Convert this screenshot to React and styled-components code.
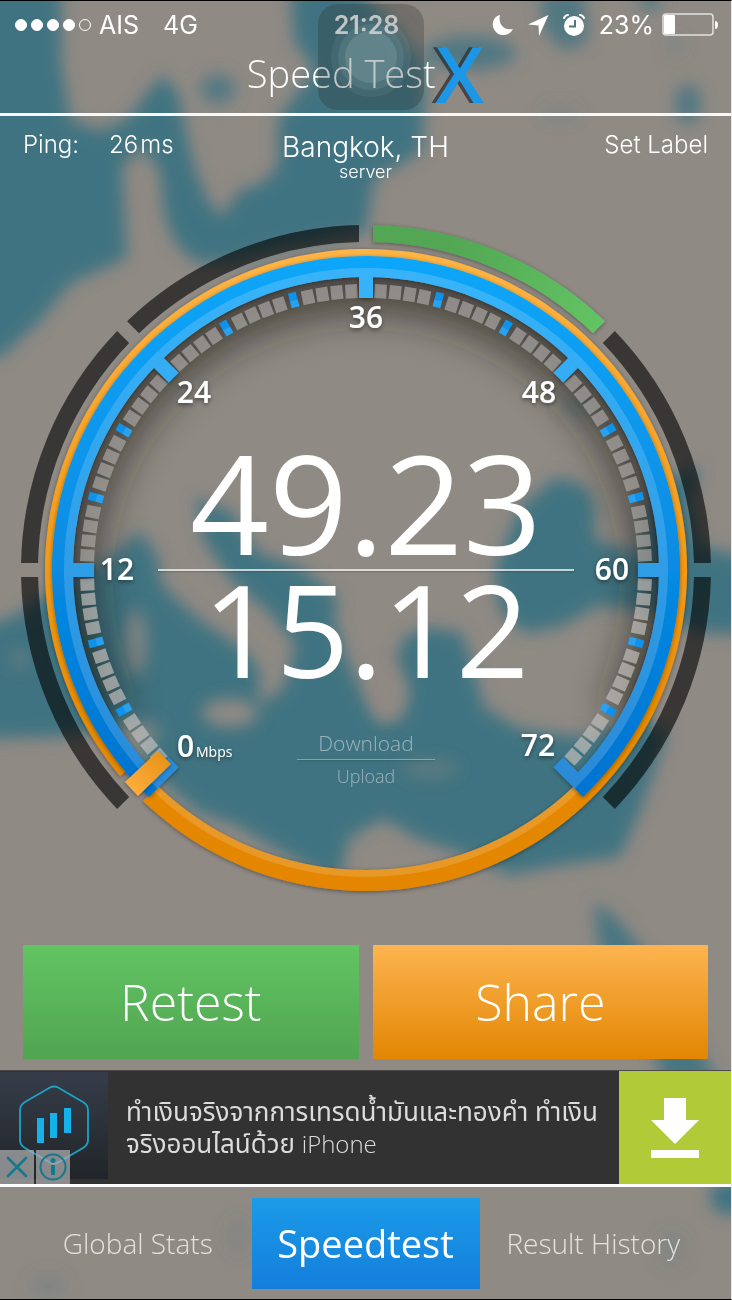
import React from "react";
import styled, { createGlobalStyle } from "styled-components";

const Global = createGlobalStyle`
  *, *::before, *::after { box-sizing: border-box; }
  body { margin: 0; background: #908a84; }
  button { font: inherit; color: inherit; border: 0; padding: 0; margin: 0; background: none; cursor: pointer; }
  a { color: inherit; text-decoration: none; }
`;

const humanist = `"Open Sans", "Noto Sans", sans-serif`;
const grotesk = `Inter, "Liberation Sans", sans-serif`;

const Page = styled.div`
  position: relative;
  isolation: isolate;
  overflow: hidden;
  display: flex;
  flex-direction: column;
  min-height: 100vh;
  color: #fff;
  background: #908a84;
  border-top: 1px solid #000;
  border-bottom: 1px solid #000;
  border-right: 1px solid #e9e9e9;
  font-family: ${humanist};
`;

const MapArt = styled.svg`
  position: absolute;
  inset: 0;
  z-index: -1;
  width: 100%;
  height: 100%;
`;

const Header = styled.header`
  position: relative;
  display: flex;
  flex-direction: column;
  height: 115px;
  border-bottom: 3px solid #f8f7fa;
`;

const StatusBar = styled.div`
  display: grid;
  grid-template-columns: 1fr auto 1fr;
  align-items: center;
  height: 46px;
  padding: 2px 13px 0 15px;
  font: 400 25px/30px ${grotesk};
`;

const StatusGroup = styled.div`
  display: flex;
  align-items: center;
  justify-content: ${(p) => (p.$end ? "flex-end" : "flex-start")};
  gap: ${(p) => p.$gap}px;
`;

const Signal = styled.span`
  display: flex;
  gap: 4px;
  margin-right: 8px;
`;

const Dot = styled.i`
  width: 12px;
  height: 12px;
  border-radius: 50%;
  border: 1px solid #fff;
  background: ${(p) => (p.$on ? "#fff" : "transparent")};
`;

const Carrier = styled.span`
  margin-right: 24px;
`;

const Clock = styled.time`
  font-weight: 600;
`;

const Brand = styled.h1`
  display: flex;
  align-items: center;
  justify-content: center;
  margin: 0;
  height: 52px;
  font-weight: 300;
  font-size: 38px;
  line-height: 52px;
`;

const BrandX = styled.span`
  font-size: 78px;
  font-weight: 600;
  line-height: 52px;
  color: #1b97e6;
  text-shadow: -4px 0 0 rgba(40, 40, 42, 0.7);
`;

const TouchPad = styled.div`
  position: absolute;
  top: 3px;
  left: calc(50% + 5px);
  transform: translateX(-50%);
  display: grid;
  place-items: center;
  width: 106px;
  height: 106px;
  border-radius: 20px;
  background: rgba(38, 42, 44, 0.28);
  pointer-events: none;
`;

const TouchRing = styled.span`
  display: grid;
  place-items: center;
  width: ${(p) => p.$size}px;
  height: ${(p) => p.$size}px;
  border-radius: 50%;
  background: rgba(190, 215, 220, ${(p) => p.$alpha});
`;

const Info = styled.section`
  display: grid;
  grid-template-columns: 1fr auto 1fr;
  height: 108px;
  padding: 13px 23px 0;
  font: 300 24px/32px ${grotesk};
`;

const Ping = styled.div`
  display: flex;
  gap: 30px;
`;

const PingValue = styled.span`
  display: flex;
  gap: 2px;
`;

const Server = styled.div`
  text-align: center;
  font-size: 28px;
  line-height: 36px;
`;

const ServerNote = styled.div`
  font-size: 18px;
  line-height: 14px;
`;

const LabelButton = styled.button`
  justify-self: end;
  align-self: start;
`;

const Gauge = styled.section`
  display: grid;
  width: 100%;
  max-width: 731px;
  margin: 0 auto;
  padding: 0 19px 0 20px;
`;

const Dial = styled.svg`
  grid-area: 1 / 1;
  width: 100%;
  height: auto;
  overflow: visible;
  font-family: ${humanist};
`;

const Readout = styled.div`
  grid-area: 1 / 1;
  display: flex;
  flex-direction: column;
  align-items: center;
  padding-top: 209px;
`;

const Speed = styled.div`
  font-size: ${(p) => p.$size}px;
  line-height: ${(p) => p.$line}px;
`;

const Rule = styled.hr`
  width: ${(p) => p.$width}px;
  height: ${(p) => p.$height}px;
  margin: 0;
  border: 0;
  background: rgba(255, 255, 255, ${(p) => p.$alpha});
  box-shadow: 0 1px 2px rgba(0, 0, 0, 0.2);
`;

const Legend = styled.div`
  display: flex;
  flex-direction: column;
  align-items: center;
  margin-top: 41px;
`;

const LegendText = styled.span`
  font-weight: 300;
  font-size: ${(p) => p.$size}px;
  line-height: 32px;
  color: rgba(255, 255, 255, 0.45);
`;

const Actions = styled.section`
  display: flex;
  gap: 14px;
  padding: 53px 23px 11px;
`;

const ActionButton = styled.button`
  flex: 1;
  height: 114px;
  font-weight: 300;
  font-size: 50px;
  line-height: 68px;
  background: linear-gradient(${(p) => p.$from}, ${(p) => p.$to});
`;

const Ad = styled.aside`
  position: relative;
  display: flex;
  height: 114px;
  background: #323232;
  border-top: 1px solid #4b4a49;
`;

const AdIcon = styled.div`
  flex: none;
  width: 108px;
  height: 107px;
  margin-top: 1px;
  background: linear-gradient(#363d49, #212529);
`;

const AdText = styled.a`
  flex: 1;
  align-self: center;
  padding: 0 18px;
  white-space: nowrap;
  font: 400 26px/32px "Open Sans", "Noto Sans Thai", "Noto Sans", sans-serif;
  color: #dcdcdc;
`;

const AdLatin = styled.span`
  font-size: 24px;
  font-weight: 300;
`;

const Download = styled.button`
  flex: none;
  display: grid;
  place-items: center;
  width: 112px;
  background: #b1cb38;
`;

const AdBadges = styled.div`
  position: absolute;
  left: 0;
  bottom: 0;
  display: flex;
  gap: 2px;
`;

const AdBadge = styled.button`
  display: grid;
  place-items: center;
  width: 34px;
  height: 34px;
  background: rgba(176, 176, 178, 0.72);
`;

const Tabs = styled.nav`
  display: grid;
  grid-template-columns: 1fr 228px 1fr;
  align-items: center;
  height: 115px;
  padding: 0 24px;
  border-top: 3px solid #fff;
`;

const Tab = styled.a`
  justify-self: center;
  font-weight: 300;
  font-size: 28px;
  line-height: 42px;
  color: rgba(255, 255, 255, 0.75);
`;

const ActiveTab = styled.a`
  display: grid;
  place-items: center;
  height: 91px;
  font-size: 38px;
  line-height: 52px;
  background: linear-gradient(#1b9be8, #147edb);
`;

/* Blurred world map behind the whole screen */
function WorldMap() {
  return (
    <MapArt viewBox="0 0 731 1298" preserveAspectRatio="xMidYMid slice" aria-hidden="true">
      <defs>
        <filter id="soft" x="-10%" y="-10%" width="120%" height="120%">
          <feGaussianBlur stdDeviation="8" />
        </filter>
      </defs>
      <g filter="url(#soft)" fill="#417381">
        <path d="M-30-30H61V60L70 118L100 130L128 118L148 90L163 74L178 92L186 130L194 165L208 200L222 216L238 190L262 182L278 165V118L300 88L314 68L294 40L290-20H350L400 30L426 70L422 150L396 166L374 178L366 232L320 240L270 250L230 262L196 262L174 240L164 212L160 170L142 146L122 166L127 257L70 283L40 320L0 357H-30Z" />
        <ellipse cx="218" cy="88" rx="18" ry="15" opacity=".75" />
        <ellipse cx="470" cy="52" rx="46" ry="17" opacity=".8" />
        <path d="M540-10H584L588 40L564 50L544 30Z" opacity=".8" />
        <ellipse cx="650" cy="0" rx="12" ry="9" opacity=".8" />
        <ellipse cx="688" cy="103" rx="13" ry="20" opacity=".8" />
        <ellipse cx="675" cy="45" rx="10" ry="10" opacity=".2" />
        <ellipse cx="560" cy="112" rx="20" ry="9" opacity=".2" />
        <path d="M556 476L584 484L600 510L596 540L640 552L650 500L682 470L700 466L690 500L700 545L760 560V634L700 632L650 612L600 604L560 626L524 632L500 610L494 570L520 506Z" />
        <ellipse cx="578" cy="405" rx="16" ry="12" opacity=".3" />
        <path d="M196 496L232 512L258 552L300 566L338 596L330 650L292 640L270 612L232 580L204 540Z" />
        <path d="M-30 632L20 612L50 590L104 560L140 530L158 556L162 584L196 616L240 646L260 668L258 706L284 686L296 640L338 626L346 656L366 700L378 722L402 718L410 690L396 660L404 636L430 626L462 632L474 668L484 706L520 728L580 736L640 718L668 730L652 776L640 810L620 856L560 864L510 874L460 852L418 838L384 818L350 836L338 880L290 856L262 840L236 824L200 812L150 770L132 726L60 736L-30 738Z" />
        <path d="M594 900L616 916L652 960L720 1085L664 1085L640 1000L598 944Z" opacity=".9" />
        <ellipse cx="730" cy="1196" rx="20" ry="18" />
        <ellipse cx="48" cy="1285" rx="20" ry="14" opacity=".18" />
        <ellipse cx="238" cy="1235" rx="12" ry="20" opacity=".15" />
        <ellipse cx="672" cy="1248" rx="16" ry="20" opacity=".15" />
      </g>
      <g filter="url(#soft)" fill="#908a84">
        <ellipse cx="136" cy="642" rx="11" ry="34" opacity=".8" />
        <ellipse cx="230" cy="712" rx="28" ry="14" />
        <ellipse cx="142" cy="732" rx="18" ry="12" opacity=".7" />
        <ellipse cx="20" cy="658" rx="10" ry="10" opacity=".4" />
        <ellipse cx="386" cy="690" rx="13" ry="28" opacity=".8" />
        <ellipse cx="430" cy="768" rx="28" ry="8" opacity=".4" />
        <ellipse cx="606" cy="518" rx="12" ry="18" opacity=".6" />
      </g>
    </MapArt>
  );
}

/* Clock-style polar coordinates: 0 degrees at the top, growing clockwise */
const rad = (deg) => (deg * Math.PI) / 180;
const polar = (r, deg) => `${(r * Math.sin(rad(deg))).toFixed(2)} ${(-r * Math.cos(rad(deg))).toFixed(2)}`;
const inset = (r, px) => (Math.asin(px / r) * 180) / Math.PI;

/* Ring sector whose ends are parallel to its spokes, px away from them */
function sector(outer, inner, from, to, px = 0) {
  const large = to - from > 180 ? 1 : 0;
  const o = inset(outer, px);
  const i = inset(inner, px);
  return [
    `M${polar(outer, from + o)}`,
    `A${outer} ${outer} 0 ${large} 1 ${polar(outer, to - o)}`,
    `L${polar(inner, to - i)}`,
    `A${inner} ${inner} 0 ${large} 0 ${polar(inner, from + i)}Z`,
  ].join("");
}

const segments = [-135, -90, -45, 0, 45, 90];
const majors = [-135, -90, -45, 0, 45, 90, 135];
const minors = segments.flatMap((start) =>
  Array.from({ length: 14 }, (_, k) => ({ angle: start + (k + 1) * 3, blue: (k + 1) % 5 === 0 }))
);
const labels = [
  ["12", -249, 10],
  ["24", -172, -167],
  ["36", 0, -242],
  ["48", 173, -167],
  ["60", 246, 10],
  ["72", 172, 186],
];

function SpeedDial() {
  return (
    <Dial viewBox="-346 -346 692 668" role="img" aria-label="Speed gauge from 0 to 72 Mbps">
      <defs>
        <linearGradient id="blue" gradientUnits="userSpaceOnUse" x1="0" y1="-314" x2="0" y2="226">
          <stop offset="0" stopColor="#11a6fa" />
          <stop offset=".4" stopColor="#0a94ea" />
          <stop offset="1" stopColor="#0073d0" />
        </linearGradient>
        <linearGradient id="orange" gradientUnits="userSpaceOnUse" x1="0" y1="-320" x2="0" y2="320">
          <stop offset="0" stopColor="#ffb444" />
          <stop offset=".5" stopColor="#f29a18" />
          <stop offset=".75" stopColor="#e68a02" />
          <stop offset="1" stopColor="#e48600" />
        </linearGradient>
        <linearGradient id="green" gradientUnits="userSpaceOnUse" x1="80" y1="-330" x2="235" y2="-235">
          <stop offset="0" stopColor="#52a652" />
          <stop offset="1" stopColor="#63c565" />
        </linearGradient>
        <linearGradient id="needle" gradientUnits="userSpaceOnUse" x1="-236" y1="222" x2="-200" y2="190">
          <stop offset="0" stopColor="#ffae3b" />
          <stop offset="1" stopColor="#e8941c" />
        </linearGradient>
        <clipPath id="face"><circle r="293" /></clipPath>
        <filter id="haze" filterUnits="userSpaceOnUse" x="-360" y="-360" width="720" height="720">
          <feGaussianBlur stdDeviation="20" />
        </filter>
        <filter id="drop" filterUnits="userSpaceOnUse" x="-360" y="-360" width="720" height="720">
          <feDropShadow dx="0" dy="1" stdDeviation="2" floodColor="#000" floodOpacity=".4" />
        </filter>
        <filter id="glyph" x="-30%" y="-30%" width="160%" height="180%">
          <feDropShadow dx="0" dy="2" stdDeviation="2" floodColor="#000" floodOpacity=".45" />
        </filter>
      </defs>

      <g clipPath="url(#face)">
        <path d={sector(325, 272, -118, 118)} transform="translate(0 12)" fill="#1c1a18" opacity=".66" filter="url(#haze)" />
      </g>

      {segments.map((a) => (
        <path
          key={a}
          d={sector(345, 328, a, a + 45, 7)}
          fill={a === 0 ? "url(#green)" : "#000"}
          fillOpacity={a === 0 ? 1 : 0.6}
          filter={a === 0 ? "url(#drop)" : undefined}
        />
      ))}

      <g filter="url(#drop)">
        <path d={sector(321, 300, -130, 224)} fill="url(#orange)" />
        <path d={sector(307, 300, 130, 224)} fill="#fff" opacity=".15" />
      </g>

      {minors.map((m) => (
        <g key={m.angle} transform={`rotate(${m.angle})`}>
          {m.blue ? (
            <>
              <rect x="-4" y="-287" width="8" height="15" fill="#0e93ec" />
              <rect x="-4" y="-279" width="8" height="7" fill="#fff" opacity=".12" />
            </>
          ) : (
            <rect x="-6" y="-286" width="12" height="14" fill={Math.abs(m.angle) < 90 ? "#aaa7a4" : "#c0bebb"} opacity=".7" />
          )}
        </g>
      ))}

      <g filter="url(#drop)">
        <path d={sector(314, 293, -135, 135, -7)} fill="url(#blue)" />
        {majors.map((a) => (
          <path key={a} d={sector(294, 272, a, a, -7)} fill="url(#blue)" />
        ))}
        <g fill="#fff" opacity=".16">
          <path d={sector(302, 293, -135, 135, -7)} />
          {majors.map((a) => (
            <path key={a} d={sector(293, 272, a, a, -7)} />
          ))}
        </g>
      </g>
      <path d="M-241 212L-208 181L-195 194L-228 226Z" fill="url(#needle)" filter="url(#drop)" />

      <g fill="#fff" fontSize="30" fontWeight="600" textAnchor="middle" filter="url(#glyph)">
        {labels.map(([text, x, y]) => (
          <text key={text} x={x} y={y}>{text}</text>
        ))}
        <text x="-189" y="187" textAnchor="start">0</text>
        <text x="-170" y="187" textAnchor="start" fontSize="14" fontWeight="400">Mbps</text>
      </g>
    </Dial>
  );
}

const MoonIcon = () => (
  <svg width="22" height="22" viewBox="0 0 22 22" aria-hidden="true">
    <path d="M8 1C6 9 11 17 21 15C18 21 10 23 5 19C-2 13 0 3 8 1Z" fill="#fff" />
  </svg>
);

const ArrowIcon = () => (
  <svg width="21" height="21" viewBox="0 0 21 21" aria-hidden="true">
    <path d="M20.500 0L0 9.500L10.500 10.500L11 21Z" fill="#fff" />
  </svg>
);

const AlarmIcon = () => (
  <svg width="22" height="22" viewBox="0 0 22 22" aria-hidden="true">
    <circle cx="11" cy="12" r="10" fill="#fff" />
    <path d="M12 6V12.500H6" fill="none" stroke="#58757b" strokeWidth="2" />
    <path d="M1 4C2 2 3 1 5 1M17 1C19 1 20 2 21 4" fill="none" stroke="#fff" strokeWidth="2" strokeLinecap="round" />
  </svg>
);

const BatteryIcon = () => (
  <svg width="56" height="24" viewBox="0 0 56 24" aria-hidden="true">
    <rect x="1" y="1" width="50" height="21" rx="3" fill="none" stroke="#fff" strokeOpacity=".75" strokeWidth="1.5" />
    <rect x="2" y="2" width="11" height="19" rx="1" fill="#fff" />
    <path d="M53 8Q56 8 56 12Q56 16 53 16Z" fill="#fff" />
  </svg>
);

const ChartHexIcon = () => (
  <svg width="108" height="107" viewBox="0 0 108 107" aria-hidden="true">
    <path d="M50 15.500Q54 13.500 58 15.500L83 30Q88 33 88 38V68Q88 73 83 76L58 90.500Q54 93 50 90.500L25 76Q20 73 20 68V38Q20 33 25 30Z" fill="none" stroke="#1aa3c9" strokeWidth="1.800" />
    <g fill="#14b1ea">
      <rect x="37" y="46" width="7" height="25" />
      <rect x="50" y="41" width="7" height="25" />
      <rect x="64" y="36" width="7" height="25" />
    </g>
  </svg>
);

const DownloadIcon = () => (
  <svg width="50" height="60" viewBox="0 0 50 60" aria-hidden="true">
    <path d="M14 0H36V22H49L25 46L1 22H14ZM1 52H49V60H1Z" fill="#fff" />
  </svg>
);

const CloseIcon = () => (
  <svg width="22" height="22" viewBox="0 0 22 22" aria-hidden="true">
    <path d="M2 2L20 20M20 2L2 20" stroke="#15798c" strokeWidth="2.600" strokeLinecap="round" />
  </svg>
);

const InfoIcon = () => (
  <svg width="28" height="28" viewBox="0 0 28 28" aria-hidden="true">
    <circle cx="14" cy="14" r="12.500" fill="none" stroke="#15798c" strokeWidth="2" />
    <circle cx="14" cy="7.500" r="2.500" fill="#15798c" />
    <path d="M12 12H16V22H12Z" fill="#15798c" />
  </svg>
);

export default function App() {
  return (
    <>
      <Global />
      <Page>
        <WorldMap />
        <Header>
          <StatusBar>
            <StatusGroup $gap={0}>
              <Signal>
                {[1, 1, 1, 1, 0].map((on, i) => (
                  <Dot key={i} $on={on} />
                ))}
              </Signal>
              <Carrier>AIS</Carrier>
              <span>4G</span>
            </StatusGroup>
            <Clock>21:28</Clock>
            <StatusGroup $end $gap={14}>
              <MoonIcon />
              <ArrowIcon />
              <AlarmIcon />
              <StatusGroup $gap={8}>
                <span>23%</span>
                <BatteryIcon />
              </StatusGroup>
            </StatusGroup>
          </StatusBar>
          <Brand>
            Speed Test<BrandX>X</BrandX>
          </Brand>
          <TouchPad>
            <TouchRing $size={80} $alpha={0.08}>
              <TouchRing $size={66} $alpha={0.1}>
                <TouchRing $size={52} $alpha={0.16} />
              </TouchRing>
            </TouchRing>
          </TouchPad>
        </Header>

        <Info>
          <Ping>
            <span>Ping:</span>
            <PingValue>
              <span>26</span>
              <span>ms</span>
            </PingValue>
          </Ping>
          <Server>
            Bangkok, TH
            <ServerNote>server</ServerNote>
          </Server>
          <LabelButton type="button">Set Label</LabelButton>
        </Info>

        <Gauge>
          <SpeedDial />
          <Readout>
            <Speed $size={138} $line={136}>49.23</Speed>
            <Rule $width={416} $height={2} $alpha={0.7} />
            <Speed $size={128} $line={115}>15.12</Speed>
            <Legend>
              <LegendText $size={21}>Download</LegendText>
              <Rule $width={138} $height={1} $alpha={0.35} />
              <LegendText $size={18}>Upload</LegendText>
            </Legend>
          </Readout>
        </Gauge>

        <Actions>
          <ActionButton type="button" $from="#62c462" $to="#51a551">Retest</ActionButton>
          <ActionButton type="button" $from="#fdb450" $to="#e28603">Share</ActionButton>
        </Actions>

        <Ad>
          <AdIcon>
            <ChartHexIcon />
          </AdIcon>
          <AdText href="#ad" lang="th">
            ทำเงินจริงจากการเทรดน้ำมันและทองคำ ทำเงิน<br />จริงออนไลน์ด้วย <AdLatin>iPhone</AdLatin>
          </AdText>
          <Download type="button" aria-label="Download">
            <DownloadIcon />
          </Download>
          <AdBadges>
            <AdBadge type="button" aria-label="Close ad"><CloseIcon /></AdBadge>
            <AdBadge type="button" aria-label="About this ad"><InfoIcon /></AdBadge>
          </AdBadges>
        </Ad>

        <Tabs>
          <Tab href="#stats">Global Stats</Tab>
          <ActiveTab href="#speedtest" aria-current="page">Speedtest</ActiveTab>
          <Tab href="#history">Result History</Tab>
        </Tabs>
      </Page>
    </>
  );
}
